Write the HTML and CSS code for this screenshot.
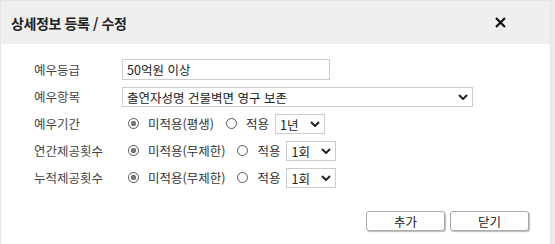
FILE: index.html
```html
<!DOCTYPE html>
<html lang="ko">
<head>
  <meta charset="UTF-8">
  <meta name="viewport" content="width=device-width, initial-scale=1.0">
  <title>상세정보 등록 / 수정</title>
  <link rel="stylesheet" href="styles.css">
</head>
<body>
  <div class="dialog">
    <div class="dialog-header">
      <h2>상세정보 등록 / 수정</h2>
      <button type="button" class="close-btn" aria-label="닫기">
        <svg width="11" height="11" viewBox="0 0 11 11">
          <path d="M1 1 L10 10 M10 1 L1 10" stroke="#111" stroke-width="2.2" fill="none"/>
        </svg>
      </button>
    </div>

    <form class="detail-form">
      <div class="form-row">
        <label class="field-label" for="grade">예우등급</label>
        <div class="field">
          <input type="text" id="grade" class="text-input" value="50억원 이상">
        </div>
      </div>

      <div class="form-row">
        <label class="field-label" for="item">예우항목</label>
        <div class="field">
          <span class="select-wrap wide">
            <select id="item">
              <option>출연자성명 건물벽면 영구 보존</option>
            </select>
            <svg class="chevron" width="10" height="6" viewBox="0 0 10 6"><path d="M1 1 L5 5 L9 1" stroke="#222" stroke-width="2" fill="none"/></svg>
          </span>
        </div>
      </div>

      <div class="form-row">
        <span class="field-label">예우기간</span>
        <div class="field options">
          <label class="opt"><input type="radio" name="period" checked>미적용(평생)</label>
          <label class="opt"><input type="radio" name="period">적용</label>
          <span class="select-wrap small">
            <select><option>1년</option></select>
            <svg class="chevron" width="10" height="6" viewBox="0 0 10 6"><path d="M1 1 L5 5 L9 1" stroke="#222" stroke-width="2" fill="none"/></svg>
          </span>
        </div>
      </div>

      <div class="form-row">
        <span class="field-label">연간제공횟수</span>
        <div class="field options">
          <label class="opt"><input type="radio" name="yearly" checked>미적용(무제한)</label>
          <label class="opt"><input type="radio" name="yearly">적용</label>
          <span class="select-wrap small">
            <select><option>1회</option></select>
            <svg class="chevron" width="10" height="6" viewBox="0 0 10 6"><path d="M1 1 L5 5 L9 1" stroke="#222" stroke-width="2" fill="none"/></svg>
          </span>
        </div>
      </div>

      <div class="form-row">
        <span class="field-label">누적제공횟수</span>
        <div class="field options">
          <label class="opt"><input type="radio" name="total" checked>미적용(무제한)</label>
          <label class="opt"><input type="radio" name="total">적용</label>
          <span class="select-wrap small">
            <select><option>1회</option></select>
            <svg class="chevron" width="10" height="6" viewBox="0 0 10 6"><path d="M1 1 L5 5 L9 1" stroke="#222" stroke-width="2" fill="none"/></svg>
          </span>
        </div>
      </div>

      <div class="form-actions">
        <button type="submit" class="btn">추가</button>
        <button type="button" class="btn">닫기</button>
      </div>
    </form>
  </div>
</body>
</html>
```

FILE: styles.css
```css
* {
  margin: 0;
  padding: 0;
  box-sizing: border-box;
}

body {
  font-family: "Noto Sans CJK KR", "Noto Sans", sans-serif;
  font-size: 12.5px;
  color: #333;
  background: #ebebeb;
  min-height: 100vh;
}

.dialog {
  width: 551px;
  min-height: 100vh;
  background: #fff;
  border-top: 1px solid #e4e4e4;
  border-left: 1px solid #e4e4e4;
  border-right: 1px solid #e4e4e4;
}

.dialog-header {
  height: 43px;
  background: #efefef;
  display: flex;
  align-items: center;
  justify-content: space-between;
  padding: 0 44px 0 10px;
}

.dialog-header h2 {
  font-size: 14px;
  font-weight: bold;
  color: #222;
  letter-spacing: -0.4px;
}

.close-btn {
  border: none;
  background: none;
  width: 11px;
  height: 11px;
  display: flex;
  cursor: pointer;
}

.detail-form {
  padding: 12px 21px 0 33px;
}

.form-row {
  display: grid;
  grid-template-columns: 88px 1fr;
  align-items: center;
  height: 27px;
}

.field-label {
  color: #444;
}

.field {
  display: flex;
  align-items: center;
}

.text-input {
  width: 208px;
  height: 21px;
  border: 1px solid #ccc;
  padding: 0 4px;
  font: inherit;
  color: #222;
  outline: none;
}

.select-wrap {
  position: relative;
  display: inline-block;
}

.select-wrap select {
  appearance: none;
  -webkit-appearance: none;
  width: 100%;
  height: 20px;
  border: 1px solid #ccc;
  background: #fff;
  padding: 0 4px;
  font: inherit;
  color: #222;
  outline: none;
}

.select-wrap.wide {
  width: 351px;
}

.select-wrap.small {
  width: 50px;
  margin-left: 6px;
}

.chevron {
  position: absolute;
  right: 5px;
  top: 7px;
  pointer-events: none;
}

.opt {
  display: inline-flex;
  align-items: center;
  gap: 9px;
  margin-left: 12px;
}

.opt:first-child {
  margin-left: 6px;
}

.opt input {
  appearance: none;
  -webkit-appearance: none;
  width: 11px;
  height: 11px;
  border: 1px solid #555;
  border-radius: 50%;
  background: #fff;
}

.opt input:checked {
  background: radial-gradient(circle, #777 0 2.5px, #fff 3px);
}

.form-actions {
  display: flex;
  justify-content: flex-end;
  gap: 5px;
  margin-top: 20px;
}

.btn {
  width: 79px;
  height: 20px;
  border: 1px solid #aaa;
  border-radius: 3px;
  background: #fff;
  box-shadow: 1px 1px 1px #bbb;
  font: inherit;
  color: #222;
  cursor: pointer;
}
```
